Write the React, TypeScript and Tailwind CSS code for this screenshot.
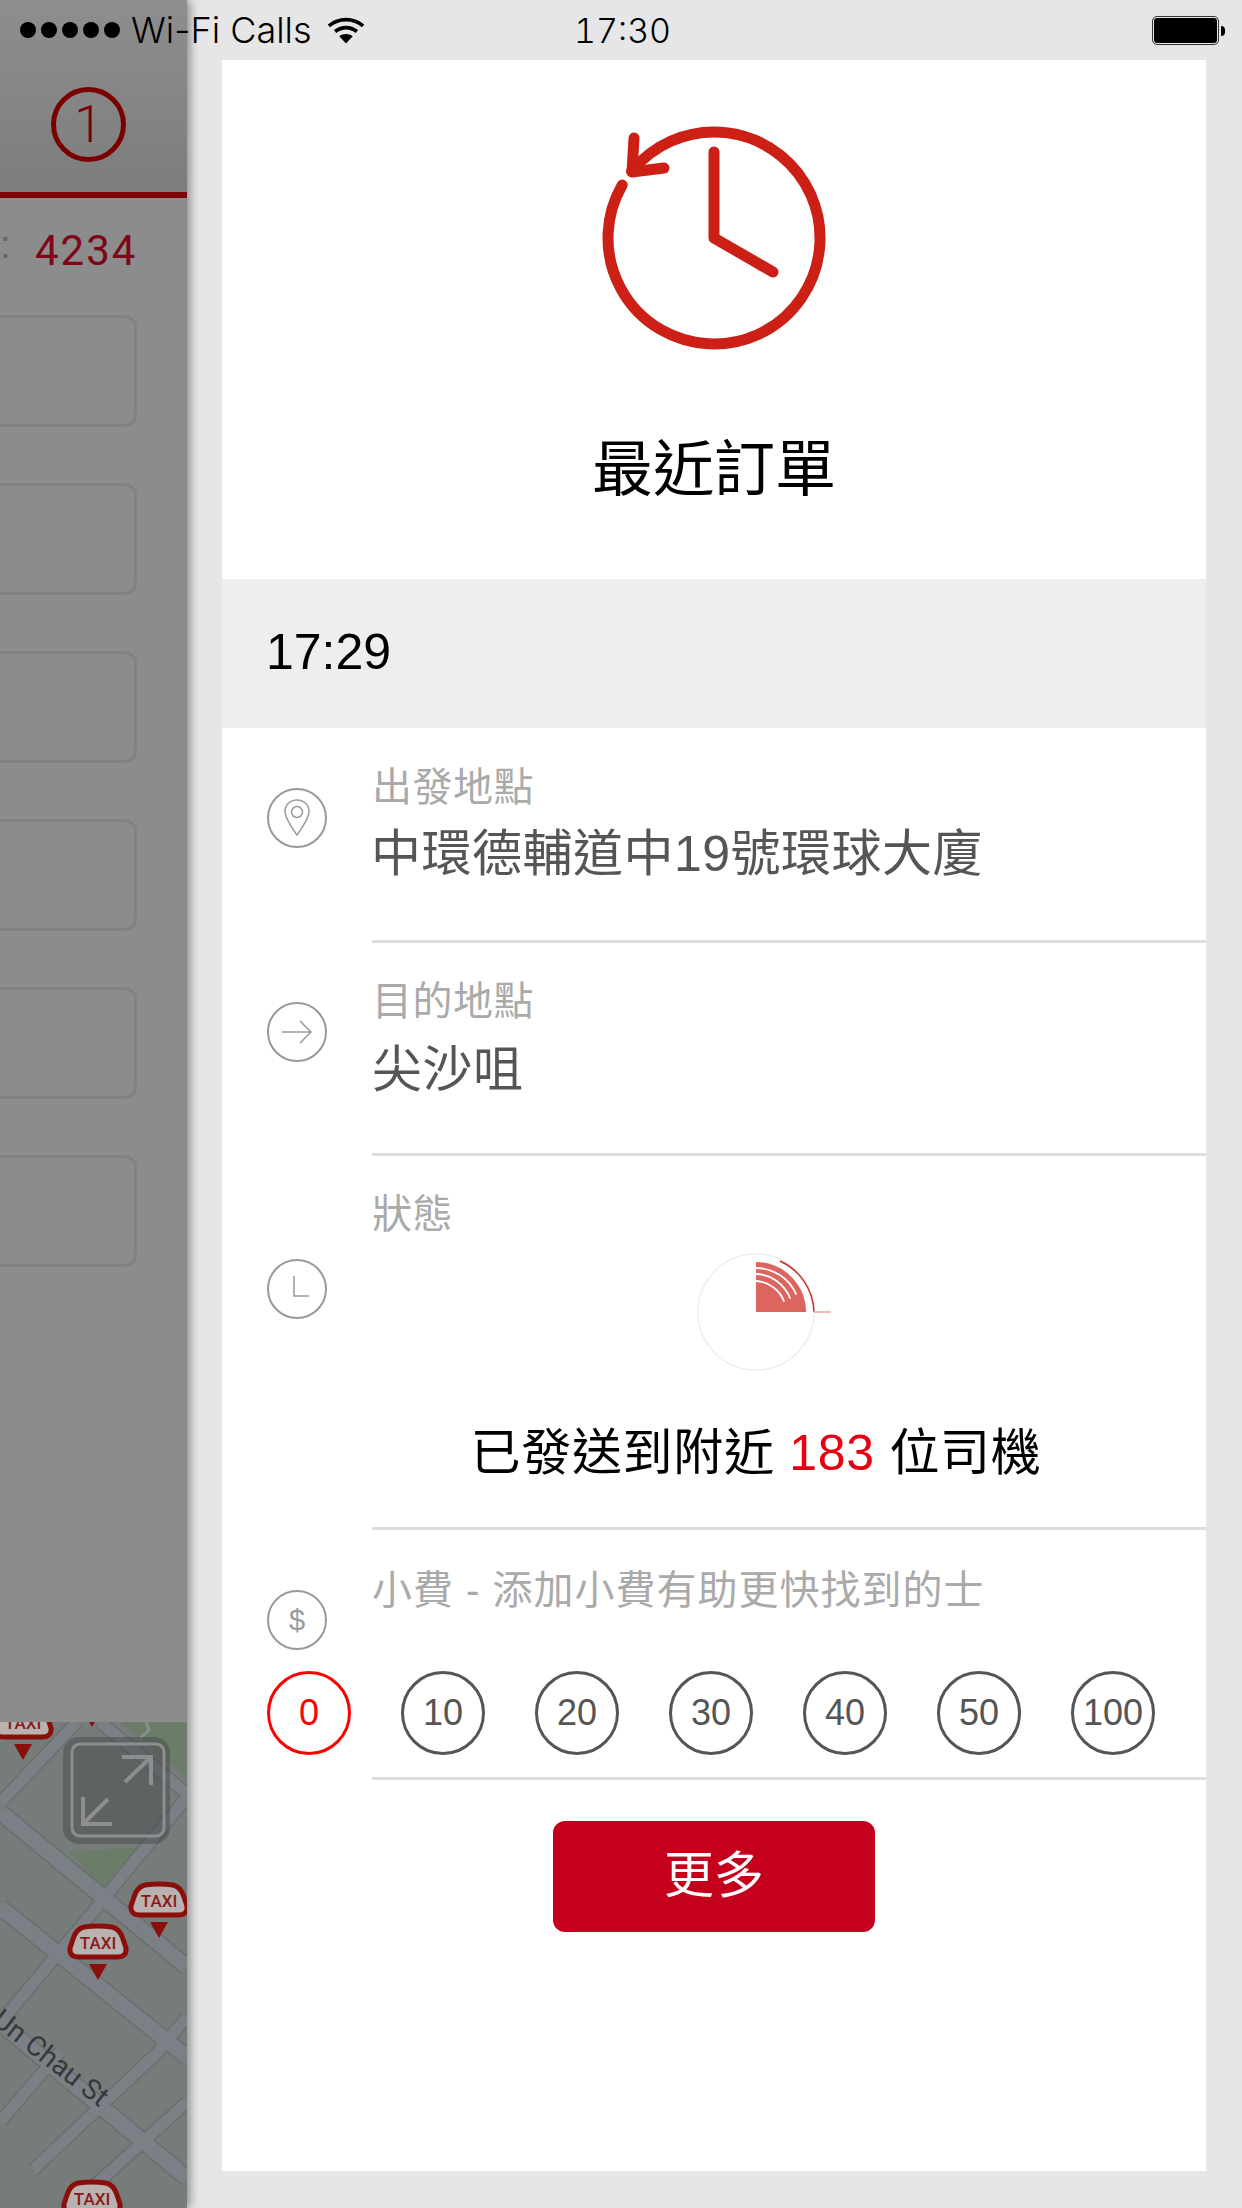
import React from 'react';

const FONT = { fontFamily: '"Liberation Sans", "Noto Sans CJK TC", sans-serif' };

const tips = [0, 10, 20, 30, 40, 50, 100];

const IconCircle = ({ className, children }: { className: string; children: React.ReactNode }) => (
  <svg viewBox="0 0 60 60" className={`w-[60px] h-[60px] shrink-0 ${className}`} fill="none" stroke="#999999" strokeWidth="2">
    <circle cx="30" cy="30" r="29" />
    {children}
  </svg>
);

const Taxi = ({ x, y }: { x: number; y: number }) => (
  <g transform={`translate(${x} ${y})`}>
    <path d="M-14 -15 Q0 -17 14 -15 Q22 -13 25 -3 L28 6 Q29 15 19 15 L-19 15 Q-29 15 -28 6 L-25 -3 Q-22 -13 -14 -15Z" fill="#b8b2b0" stroke="#8a0f0a" strokeWidth="5" />
    <path d="M-9 22 L9 22 L0 38Z" fill="#8a0f0a" />
    <text x="0" y="7" textAnchor="middle" fontSize="17" fontWeight="500" fill="#8a1a18" fontFamily="Roboto, sans-serif">TAXI</text>
  </g>
);

const roads = [
  'M0 90L187 245',
  'M0 185L187 335',
  'M100 0L187 72',
  'M0 301L187 456',
  'M0 81L77 0',
  'M0 301L97 185L187 75',
  'M33 448L157 331L187 295',
  'M0 400L60 330',
  'M70 486L187 380',
];

const MapView = () => (
  <svg viewBox="0 0 187 486" className="w-[187px] h-[486px] block">
    <rect width="187" height="486" fill="#767c7a" />
    <path d="M120 0L187 0L187 55L150 25Z" fill="#6b7c69" />
    <path d="M68 130L140 125L108 170Z" fill="#6b7c69" />
    {roads.map((d, i) => (
      <path key={i} d={d} stroke="#6a6f6e" strokeWidth={i < 2 || i === 3 ? 18 : 14} fill="none" />
    ))}
    {roads.map((d, i) => (
      <path key={i} d={d} stroke="#7b8087" strokeWidth={i < 2 || i === 3 ? 15 : 11} fill="none" />
    ))}
    <path d="M146 0L149 8L140 16" stroke="#8b8f8f" strokeWidth="3" fill="none" />
    <text transform="translate(-9 301) rotate(38)" fontSize="28" fill="#33393a" fontFamily="Roboto, sans-serif">Un Chau St</text>
    <rect x="63" y="15" width="107" height="107" rx="16" fill="#3a3d3e" fillOpacity="0.4" />
    <rect x="72" y="22" width="92" height="92" rx="8" fill="none" stroke="#8e8e8e" strokeWidth="3" />
    <path d="M122 35L151 35L151 63M151 35L125 60" fill="none" stroke="#8e8e8e" strokeWidth="4" />
    <path d="M83 75L83 102L112 102M83 102L108 77" fill="none" stroke="#8e8e8e" strokeWidth="4" />
    <Taxi x={23} y={0} />
    <Taxi x={92} y={-33} />
    <Taxi x={159} y={178} />
    <Taxi x={98} y={220} />
    <Taxi x={92} y={476} />
  </svg>
);

const LeftPanel = () => (
  <div className="w-[187px] h-[2208px] shrink-0 flex flex-col bg-[#8c8c8c] overflow-hidden relative z-10 shadow-[3px_0_9px_rgba(0,0,0,0.4)]">
    <div className="h-[192px] pt-[87px] pl-[51px] bg-gradient-to-b from-[#8e8e8e] to-[#7d7d7d]">
      <div className="w-[75px] h-[75px] rounded-full border-[5px] border-[#7a0000] flex items-center justify-center text-[52px] text-[#7a0000] font-light" style={{ fontFamily: 'Roboto, sans-serif' }}>1</div>
    </div>
    <div className="h-[6px] bg-[#7d0208]" />
    <div className="h-[117px] flex items-center pb-[12px] relative">
      <span className="absolute left-0 top-[25px] text-[38px] leading-[44px] text-[#666666]" style={FONT}>:</span>
      <span className="ml-[35px] text-[42px] tracking-[2px] text-[#7d0716]" style={{ fontFamily: 'Roboto, sans-serif' }}>4234</span>
    </div>
    <div className="flex flex-col gap-[56px]">
      {[0, 1, 2, 3, 4, 5].map((n) => (
        <div key={n} className="w-[137px] h-[112px] border-[3px] border-l-0 border-[#828282] rounded-r-[12px]" />
      ))}
    </div>
    <div className="mt-auto">
      <MapView />
    </div>
  </div>
);

const RecentOrder = () => (
  <div className="flex-1 bg-white flex flex-col" style={FONT}>
    {/* header */}
    <div className="h-[519px] flex flex-col items-center">
      <svg viewBox="0 0 240 240" className="w-[240px] h-[240px] mt-[58px]" fill="none" stroke="#cc2016" strokeWidth="11" strokeLinecap="round" strokeLinejoin="round">
        <path d="M28.200 67 A106 106 0 1 0 37.620 53.290" />
        <path d="M40 20 L38 54 L70 50" />
        <path d="M120 34 L120 120 L179 154" />
      </svg>
      <div className="mt-[77px] text-[61px] leading-[70px] text-black">最近訂單</div>
    </div>
    {/* time band */}
    <div className="h-[149px] bg-[#eeeeee] flex items-center pl-[44px] pb-[2px] text-[50px] text-black">17:29</div>

    {/* pickup */}
    <div className="flex pl-[45px] h-[215px]">
      <IconCircle className="mt-[60px]">
        <path d="M30 12c-7 0-12 5-12 11.500C18 31 26 41 30 47c4-6 12-16 12-23.500C42 17 37 12 30 12Z" strokeWidth="1.500" />
        <circle cx="30" cy="24" r="5.500" strokeWidth="1.500" />
      </IconCircle>
      <div className="ml-[45px] flex-1 border-b-[3px] border-[#dddddd] pt-[39px]">
        <div className="text-[40px] leading-[40px] tracking-[0.5px] text-[#aaaaaa]">出發地點</div>
        <div className="mt-[17px] -ml-[1px] text-[50px] leading-[60px] tracking-[0.5px] text-[#555555]">中環德輔道中19號環球大廈</div>
      </div>
    </div>

    {/* destination */}
    <div className="flex pl-[45px] h-[213px]">
      <IconCircle className="mt-[59px]">
        <path d="M15 30H44M33 19L44 30L33 41" strokeWidth="1.500" />
      </IconCircle>
      <div className="ml-[45px] flex-1 border-b-[3px] border-[#dddddd] pt-[38px]">
        <div className="text-[40px] leading-[40px] tracking-[0.5px] text-[#aaaaaa]">目的地點</div>
        <div className="mt-[19px] text-[50px] leading-[60px] tracking-[0.5px] text-[#555555]">尖沙咀</div>
      </div>
    </div>

    {/* status */}
    <div className="flex pl-[45px] h-[374px]">
      <IconCircle className="mt-[103px]">
        <path d="M27 17V37H42" strokeWidth="1.500" />
      </IconCircle>
      <div className="ml-[45px] flex-1 border-b-[3px] border-[#dddddd] pt-[38px]">
        <div className="text-[40px] leading-[40px] tracking-[0.5px] text-[#aaaaaa]">狀態</div>
        <div className="w-[768px] flex flex-col items-center">
          <svg viewBox="0 0 160 130" className="w-[160px] h-[130px] mt-[7px]">
            <circle cx="80" cy="71" r="58" fill="none" stroke="#eeeeee" strokeWidth="1.500" />
            <path d="M80 21A50 50 0 0 1 130 71H80Z" fill="#dd6560" />
            <path d="M104 20A58 58 0 0 1 138 71" fill="none" stroke="#c9302c" strokeWidth="1.500" />
            <path d="M138 71H155" stroke="#f0b8b6" strokeWidth="2" />
            <path d="M80 27A44 44 0 0 1 120 53M80 33A38 38 0 0 1 114 57M80 40A32 32 0 0 1 108 60" fill="none" stroke="#ffffff" strokeWidth="1.800" strokeLinecap="round" />
          </svg>
          <div className="mt-[52px] text-[50px] leading-[60px] tracking-[0.7px] text-black whitespace-nowrap">
            已發送到附近 <span className="text-[#e60012]">183</span> 位司機
          </div>
        </div>
      </div>
    </div>

    {/* tip */}
    <div className="flex pl-[45px] h-[141px]">
      <IconCircle className="mt-[60px]">
        <text x="30" y="40" textAnchor="middle" fontSize="29" fill="#999999" stroke="none" fontFamily="Liberation Sans, sans-serif">$</text>
      </IconCircle>
      <div className="ml-[45px] flex-1 pt-[40px]">
        <div className="text-[40px] leading-[40px] tracking-[1px] text-[#aaaaaa] whitespace-nowrap">小費 - 添加小費有助更快找到的士</div>
      </div>
    </div>
    <div className="flex gap-[50px] pl-[45px] pb-[22px]">
      {tips.map((t) => (
        <div
          key={t}
          className={t === 0
            ? 'w-[84px] h-[84px] rounded-full border-[3px] border-[#ff0000] text-[#ff0000] flex items-center justify-center text-[36px]'
            : 'w-[84px] h-[84px] rounded-full border-[3px] border-[#555555] text-[#555555] flex items-center justify-center text-[36px]'}
        >
          {t}
        </div>
      ))}
    </div>
    <div className="ml-[150px] border-b-[3px] border-[#dddddd]" />

    <button className="self-center mt-[41px] w-[322px] h-[111px] rounded-[12px] bg-[#c4001d] text-white text-[50px]">更多</button>
  </div>
);

const StatusBar = () => (
  <div className="absolute top-0 left-0 w-full h-[60px] z-20 flex items-center pl-[20px] text-black text-[36px] font-light" style={{ fontFamily: 'Inter, sans-serif' }}>
    <div className="flex gap-[5px]">
      {[0, 1, 2, 3, 4].map((n) => (
        <div key={n} className="w-[16px] h-[16px] rounded-full bg-black" />
      ))}
    </div>
    <span className="ml-[11px] whitespace-nowrap">Wi-Fi Calls</span>
    <svg viewBox="0 0 36 26" className="ml-[15px] w-[38px] h-[27px]" fill="none" stroke="#000" strokeWidth="3.500">
      <path d="M1.500 8.500C11 0.500 25 0.500 34.500 8.500" />
      <path d="M7.500 14C14 9 22 9 28.500 14" />
      <path d="M18 25.500L11.500 18.500C15 15.500 21 15.500 24.500 18.500Z" fill="#000" stroke="none" />
    </svg>
    <span className="absolute left-[574px] text-[34px] tabular-nums">17:30</span>
    <div className="absolute left-[1152px] top-[16px] flex items-center">
      <div className="w-[67px] h-[29px] rounded-[5px] border border-[#333333] p-[1px]">
        <div className="w-full h-full rounded-[3px] bg-black" />
      </div>
      <div className="w-[4px] h-[10px] ml-[2px] rounded-r-full bg-black" />
    </div>
  </div>
);

const App = () => {
  return (
    <div className="relative w-[1242px] h-[2208px] flex bg-[#e6e6e6] overflow-hidden">
      <StatusBar />
      <LeftPanel />
      <div className="flex-1 flex pt-[60px] pl-[35px] pr-[36px] pb-[37px]">
        <RecentOrder />
      </div>
    </div>
  );
};

export default App;
